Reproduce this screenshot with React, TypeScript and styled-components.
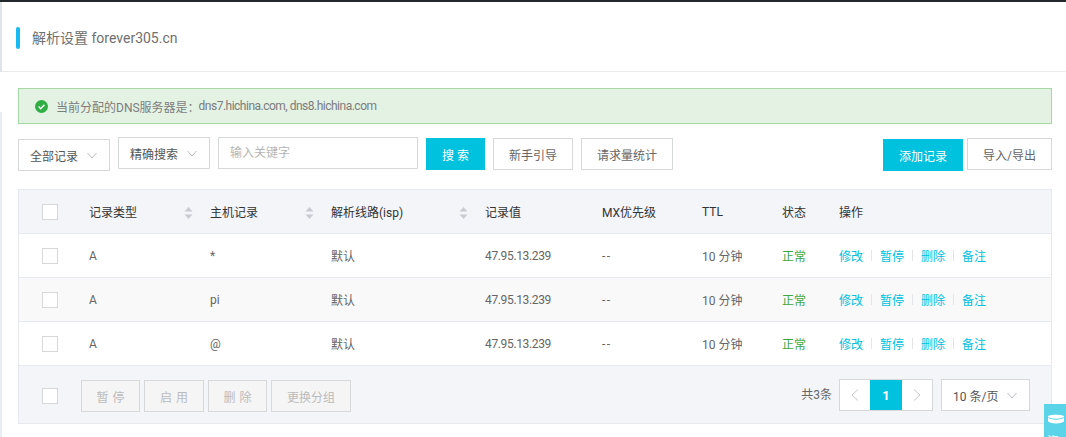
import styled, { createGlobalStyle } from "styled-components"

const GlobalStyle = createGlobalStyle`
  html, body {
    margin: 0;
    height: 100%;
    overflow: hidden;
    background: #fff;
  }
  body {
    font-family: Roboto, "Noto Sans CJK SC", sans-serif;
    font-size: 12px;
    color: #666;
  }
  * {
    box-sizing: border-box;
  }
`

const Page = styled.div`
  position: relative;
  width: 1066px;
  height: 437px;
  overflow: hidden;
  border-top: 2px solid #23282c;
  display: flex;
`

const Rail = styled.div`
  width: 2px;
  flex: none;
  display: flex;
  flex-direction: column;
  justify-content: space-between;
`

const RailPiece = styled.div<{ $h: number; $color: string }>`
  height: ${(p) => p.$h}px;
  background: ${(p) => p.$color};
`

const Main = styled.div`
  flex: 1;
  min-width: 0;
`

const Header = styled.div`
  height: 70px;
  border-bottom: 1px solid #e9e9e9;
  padding: 25px 0 0 14px;
  display: flex;
  align-items: flex-start;
`

const Accent = styled.span`
  width: 4px;
  height: 22px;
  border-radius: 2px;
  background: #18b8f0;
  margin-right: 12px;
`

const Title = styled.h1`
  margin: 0;
  font-size: 14px;
  line-height: 22px;
  font-weight: 400;
  color: #707070;
`

const Body = styled.div`
  padding: 16px 14px 0 16px;
`

const Alert = styled.div`
  height: 36px;
  background: #e4f2e4;
  border: 1px solid #a7d7a7;
  display: flex;
  align-items: center;
  padding-left: 16px;
  color: #7c7c7c;
`

const AlertIcon = styled.svg`
  width: 13px;
  height: 13px;
  margin-right: 8px;
`

const AlertHosts = styled.span`
  margin-left: -1px;
  letter-spacing: -0.5px;
`

const Toolbar = styled.div`
  display: flex;
  align-items: flex-start;
  margin-top: 13px;
  height: 38px;
`

const Select = styled.div<{ $top?: number; $width: number; $gap?: number }>`
  width: ${(p) => p.$width}px;
  height: 32px;
  margin-top: ${(p) => p.$top ?? 0}px;
  margin-right: ${(p) => p.$gap ?? 8}px;
  background: #fff;
  border: 1px solid #d7d8da;
  display: flex;
  align-items: center;
  justify-content: space-between;
  padding: 0 12px 0 11px;
  color: #555;
`

const Chevron = styled.svg`
  width: 10px;
  height: 7px;
  fill: none;
  stroke: #b8bcc2;
  stroke-width: 1;
`

const SearchInput = styled.div`
  width: 200px;
  height: 32px;
  margin-right: 8px;
  border: 1px solid #d7d8da;
  padding-left: 11px;
  line-height: 31px;
  color: #b5b5b5;
`

const Button = styled.button<{ $primary?: boolean; $top?: number; $width: number; $gap?: number }>`
  width: ${(p) => p.$width}px;
  height: 32px;
  margin-top: ${(p) => p.$top ?? 1}px;
  margin-right: ${(p) => p.$gap ?? 0}px;
  padding: 0;
  font: inherit;
  color: ${(p) => (p.$primary ? "#fff" : "#666")};
  background: ${(p) => (p.$primary ? "#00c1de" : "#fff")};
  border: ${(p) => (p.$primary ? "0" : "1px solid #d7d8da")};
`

const Spacer = styled.div`
  flex: 1;
`

const Table = styled.div`
  margin-top: 14px;
  border: 1px solid #e6e9ee;
`

const Row = styled.div<{ $kind?: "head" | "odd" | "even" }>`
  display: grid;
  grid-template-columns: 70px 121px 121px 154px 117px 100px 80px 57px 1fr;
  align-items: center;
  height: 44px;
  border-bottom: 1px solid #e6e9ee;
  color: ${(p) => (p.$kind === "head" ? "#333" : "#666")};
  background: ${(p) =>
    p.$kind === "head" ? "#f4f5f9" : p.$kind === "even" ? "#f9f9f9" : "#fff"};
`

const CheckCell = styled.div`
  padding-left: 23px;
  display: flex;
`

const Checkbox = styled.span<{ $top?: number; $gap?: number }>`
  width: 16px;
  height: 16px;
  margin-top: ${(p) => p.$top ?? 0}px;
  margin-right: ${(p) => p.$gap ?? 0}px;
  background: #fff;
  border: 1px solid #d7d8da;
`

const Cell = styled.div`
  position: relative;
  white-space: nowrap;
`

const IpCell = styled(Cell)`
  letter-spacing: -0.35px;
`

const DashCell = styled(Cell)`
  letter-spacing: 1.5px;
`

const SortMark = styled.svg`
  position: absolute;
  top: 50%;
  right: 17px;
  margin-top: -6px;
  width: 9px;
  height: 14px;
`

const Status = styled.span`
  color: #3fa83f;
`

const Ops = styled.div`
  display: flex;
  align-items: center;
`

const OpLink = styled.a`
  color: #00c1de;
`

const OpSep = styled.i`
  width: 1px;
  height: 11px;
  background: #e3e5e8;
  margin: 0 8px;
`

const Footer = styled.div`
  height: 57px;
  background: #f4f5f9;
  display: flex;
  align-items: flex-start;
  padding: 13px 21px 0 23px;
`

const BatchButton = styled.button<{ $width: number; $spaced?: boolean }>`
  width: ${(p) => p.$width}px;
  height: 32px;
  margin-top: 1px;
  margin-right: 4px;
  padding: 0 0 0 ${(p) => (p.$spaced ? "4px" : "0")};
  font: inherit;
  color: #bbb;
  letter-spacing: ${(p) => (p.$spaced ? "4px" : "0")};
  background: #f5f5f5;
  border: 1px solid #d7d8da;
`

const Total = styled.span`
  margin-right: 7px;
  line-height: 32px;
  color: #666;
`

const Pager = styled.div`
  display: flex;
  width: 94px;
  height: 32px;
  border: 1px solid #d7d8da;
  background: #fff;
  margin-right: 8px;
`

const PageArrow = styled.span`
  flex: 1;
  display: flex;
  align-items: center;
  justify-content: center;
`

const PageNow = styled.span`
  width: 32px;
  display: flex;
  align-items: center;
  justify-content: center;
  background: #00c1de;
  color: #fff;
  font-weight: 700;
  font-size: 13px;
`

const ArrowIcon = styled.svg`
  width: 8px;
  height: 12px;
  fill: none;
  stroke: #c4c6ca;
  stroke-width: 1;
`

const Float = styled.div`
  position: absolute;
  right: 0;
  top: 402px;
  width: 22px;
  height: 60px;
  background: #5bd3e8;
  padding: 10px 0 0 3px;
`

const FloatIcon = styled.svg`
  display: block;
  width: 18px;
  height: 10px;
`

const FloatText = styled.span`
  display: block;
  color: #fff;
  font-size: 12px;
  line-height: 14px;
  margin-top: 11px;
`

const Sort = () => (
  <SortMark viewBox="0 0 9 14">
    <path d="M4.5 1 L8.5 5.5 H.5 Z" fill="#c8ccd2" />
    <path d="M.5 8.5 H8.5 L4.5 13 Z" fill="#c8ccd2" />
  </SortMark>
)

const Down = () => (
  <Chevron viewBox="0 0 10 7">
    <path d="M.5 1 L5 6 L9.5 1" />
  </Chevron>
)

const rows: { host: string; kind: "odd" | "even" }[] = [
  { host: "*", kind: "odd" },
  { host: "pi", kind: "even" },
  { host: "@", kind: "odd" },
]

export default function App() {
  return (
    <>
      <GlobalStyle />
      <Page>
        <Rail>
          <RailPiece $h={70} $color="#dfe3ea" />
          <RailPiece $h={325} $color="#e8edf3" />
        </Rail>
        <Main>
          <Header>
            <Accent />
            <Title>解析设置 forever305.cn</Title>
          </Header>
          <Body>
            <Alert>
              <AlertIcon viewBox="0 0 13 13">
                <circle cx="6.5" cy="6.5" r="6.5" fill="#2fae44" />
                <path d="M3.6 6.6 L5.7 8.7 L9.4 4.8" fill="none" stroke="#fff" strokeWidth="1.4" />
              </AlertIcon>
              当前分配的DNS服务器是：
              <AlertHosts>dns7.hichina.com, dns8.hichina.com</AlertHosts>
            </Alert>
            <Toolbar>
              <Select $width={92} $top={2}>
                全部记录
                <Down />
              </Select>
              <Select $width={92}>
                精确搜索
                <Down />
              </Select>
              <SearchInput>输入关键字</SearchInput>
              <Button $primary $width={59} $gap={8}>
                搜 索
              </Button>
              <Button $width={80} $gap={8}>
                新手引导
              </Button>
              <Button $width={92}>请求量统计</Button>
              <Spacer />
              <Button $primary $width={80} $top={2} $gap={4}>
                添加记录
              </Button>
              <Button $width={85}>导入/导出</Button>
            </Toolbar>
            <Table>
              <Row $kind="head">
                <CheckCell>
                  <Checkbox />
                </CheckCell>
                <Cell>
                  记录类型
                  <Sort />
                </Cell>
                <Cell>
                  主机记录
                  <Sort />
                </Cell>
                <Cell>
                  解析线路(isp)
                  <Sort />
                </Cell>
                <Cell>记录值</Cell>
                <Cell>MX优先级</Cell>
                <Cell>TTL</Cell>
                <Cell>状态</Cell>
                <Cell>操作</Cell>
              </Row>
              {rows.map((r) => (
                <Row key={r.host} $kind={r.kind}>
                  <CheckCell>
                    <Checkbox />
                  </CheckCell>
                  <Cell>A</Cell>
                  <Cell>{r.host}</Cell>
                  <Cell>默认</Cell>
                  <IpCell>47.95.13.239</IpCell>
                  <DashCell>--</DashCell>
                  <Cell>10 分钟</Cell>
                  <Cell>
                    <Status>正常</Status>
                  </Cell>
                  <Ops>
                    <OpLink>修改</OpLink>
                    <OpSep />
                    <OpLink>暂停</OpLink>
                    <OpSep />
                    <OpLink>删除</OpLink>
                    <OpSep />
                    <OpLink>备注</OpLink>
                  </Ops>
                </Row>
              ))}
              <Footer>
                <Checkbox $top={9} $gap={23} />
                <BatchButton $width={59} $spaced>暂停</BatchButton>
                <BatchButton $width={60} $spaced>启用</BatchButton>
                <BatchButton $width={59} $spaced>删除</BatchButton>
                <BatchButton $width={80}>更换分组</BatchButton>
                <Spacer />
                <Total>共3条</Total>
                <Pager>
                  <PageArrow>
                    <ArrowIcon viewBox="0 0 8 12">
                      <path d="M7 .5 L1 6 L7 11.5" />
                    </ArrowIcon>
                  </PageArrow>
                  <PageNow>1</PageNow>
                  <PageArrow>
                    <ArrowIcon viewBox="0 0 8 12">
                      <path d="M1 .5 L7 6 L1 11.5" />
                    </ArrowIcon>
                  </PageArrow>
                </Pager>
                <Select $width={89} $gap={0}>
                  10 条/页
                  <Down />
                </Select>
              </Footer>
            </Table>
          </Body>
        </Main>
        <Float>
          <FloatIcon viewBox="0 0 18 10">
            <path d="M1 2 C4 .3 14 .3 17 2 V7.5 C14 10 4 10 1 7.5 Z" fill="#fff" />
            <path d="M1.5 3.5 C5 5.8 13 5.8 16.5 3.5" fill="none" stroke="#5bd3e8" strokeWidth="1" />
          </FloatIcon>
          <FloatText>咨</FloatText>
        </Float>
      </Page>
    </>
  )
}
